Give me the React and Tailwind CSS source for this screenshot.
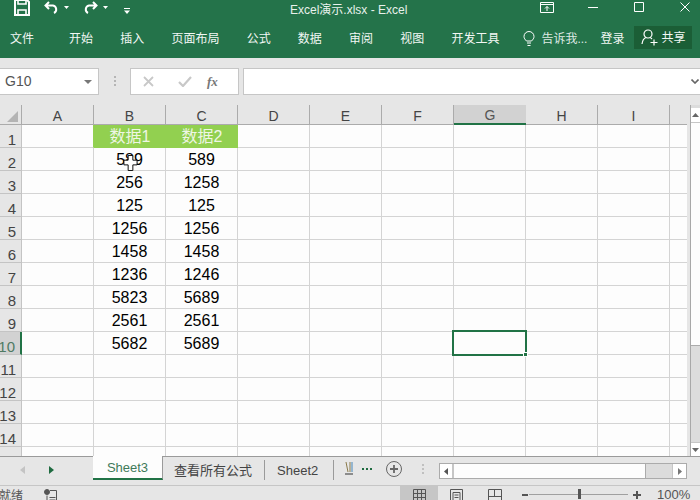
// App.jsx — Excel window with a small data sheet
const FONT = "font-['Liberation_Sans','Noto_Sans_CJK_SC',sans-serif]";
const COLS = ["A", "B", "C", "D", "E", "F", "G", "H", "I"];
const ROWS = [
  ["", "数据1", "数据2"],
  ["", "589", "589"],
  ["", "256", "1258"],
  ["", "125", "125"],
  ["", "1256", "1256"],
  ["", "1458", "1458"],
  ["", "1236", "1246"],
  ["", "5823", "5689"],
  ["", "2561", "2561"],
  ["", "5682", "5689"],
  [], [], [], [], [],
];
const TABS = ["开始", "插入", "页面布局", "公式", "数据", "审阅", "视图", "开发工具"];

function TitleBar() {
  return (
    <div className="relative flex h-[20px] items-center overflow-hidden text-white">
      <svg width="16" height="17" viewBox="0 0 16 17" className="ml-[14px] mt-[-6px] shrink-0" fill="none" stroke="#fff" strokeWidth="2">
        <path d="M1 1h12l2 2v13H1z" />
        <path d="M4 1v4h8V1M4 16v-5h8v5" strokeWidth="1.6" />
      </svg>
      <svg width="15" height="13" viewBox="0 0 15 13" className="ml-[14px] mt-[-6px] shrink-0" fill="none" stroke="#fff" strokeWidth="2">
        <path d="M5 1 1.5 4.5 5 8M2 4.5h7a4 4 0 0 1 1 7.5" />
      </svg>
      <svg width="5" height="3" viewBox="0 0 5 3" className="ml-[5px] mt-[-6px] shrink-0" fill="#fff"><path d="M0 0h5L2.5 3z" /></svg>
      <svg width="15" height="13" viewBox="0 0 15 13" className="ml-[14px] mt-[-6px] shrink-0" fill="none" stroke="#fff" strokeWidth="2">
        <path d="M10 1l3.5 3.5L10 8M13 4.5H6a4 4 0 0 0-1 7.5" />
      </svg>
      <svg width="5" height="3" viewBox="0 0 5 3" className="ml-[5px] mt-[-6px] shrink-0" fill="#fff"><path d="M0 0h5L2.5 3z" /></svg>
      <svg width="6" height="6" viewBox="0 0 6 6" className="ml-[16px] mt-[1px] shrink-0" fill="#fff"><path d="M0 0h6v1H0zM0 2.5h6L3 6z" /></svg>
      <span className="ml-[160px] text-[12px] leading-none text-[#e8f1ec]">Excel演示.xlsx - Excel</span>
      <svg width="14" height="11" viewBox="0 0 14 11" className="ml-auto mb-[6px] mr-[34px] shrink-0" fill="none" stroke="#fff">
        <path d="M.5.5h13v10H.5zM.5 2.5h13M7 9V4.5M5 6.5l2-2 2 2" />
      </svg>
      <svg width="10" height="1" viewBox="0 0 10 1" className="mb-[6px] mr-[36px] shrink-0"><path d="M0 .5h10" stroke="#fff" /></svg>
      <svg width="10" height="10" viewBox="0 0 10 10" className="mb-[6px] mr-[36px] shrink-0" fill="none" stroke="#fff"><path d="M.5.5h9v9h-9z" /></svg>
      <svg width="10" height="10" viewBox="0 0 10 10" className="mb-[6px] mr-[10px] shrink-0" fill="none" stroke="#fff"><path d="M.5.5l9 9M9.500.5l-9 9" /></svg>
    </div>
  );
}

function RibbonTabs() {
  return (
    <div className="flex h-[38px] items-start pl-[10px] pt-[11px] text-[12px] leading-[16px] text-[#f2f7f4]">
      <span className="mr-[35px]">文件</span>
      <div className="flex gap-[27.2px]">
        {TABS.map((t) => <span key={t}>{t}</span>)}
      </div>
      <svg width="12" height="16" viewBox="0 0 12 16" className="ml-[24px] shrink-0" fill="none" stroke="#fff" strokeWidth="1">
        <path d="M3.5 10C2 8.500 1 7.300 1 5.500a5 5 0 0 1 10 0c0 1.800-1 3-2.500 4.500zM4 12h4M4.500 14.500h3" />
      </svg>
      <span className="ml-[6px] w-[45px] whitespace-nowrap text-[#dfeae4]">告诉我...</span>
      <span className="ml-[14px]">登录</span>
      <div className="ml-[10px] mt-[-5px] flex h-[23px] w-[58px] items-center bg-[#1b5e36] pl-[7px]">
        <svg width="17" height="17" viewBox="0 0 17 17" className="shrink-0" fill="none" stroke="#fff" strokeWidth="1.2">
          <circle cx="7" cy="5" r="4" />
          <path d="M1 15c.5-3.500 2.500-6 4-6.500M9 8.500c.8.300 1.500.9 2 1.500M9.500 13.500h7M13 10.500v6" />
        </svg>
        <span className="ml-[3px] whitespace-nowrap">共享</span>
      </div>
    </div>
  );
}

function FormulaBar() {
  return (
    <div className="flex h-[47px] items-start bg-[#e6e6e6] pt-[10px]">
      <div className="flex h-[27px] w-[99px] items-center justify-between border-y border-r border-[#c6c6c6] bg-white pl-[5px] pr-[6px] text-[14px] text-[#555]">
        G10
        <svg width="8" height="4" viewBox="0 0 8 4" fill="#777"><path d="M0 0h8L4 4z" /></svg>
      </div>
      <div className="ml-[15px] mt-[8px] flex w-[2px] flex-col gap-[2px]">
        <i className="h-[2px] bg-[#b5b5b5]" /><i className="h-[2px] bg-[#b5b5b5]" /><i className="h-[2px] bg-[#b5b5b5]" />
      </div>
      <div className="ml-[14px] flex h-[27px] w-[109px] items-center border border-[#c6c6c6] bg-white">
        <svg width="11" height="11" viewBox="0 0 11 11" className="ml-[12px]" fill="none" stroke="#c8c8c8" strokeWidth="1.800"><path d="M1 1l9 9M10 1l-9 9" /></svg>
        <svg width="14" height="11" viewBox="0 0 14 11" className="ml-[24px]" fill="none" stroke="#c8c8c8" strokeWidth="2.200"><path d="M1 6l4 4 8-9" /></svg>
        <span className="ml-[15px] font-['Liberation_Serif',serif] text-[13px] font-bold italic text-[#777]">fx</span>
      </div>
      <div className="ml-[4px] flex h-[27px] flex-1 items-center justify-end border-y border-l border-[#c6c6c6] bg-white pr-[1px]">
        <svg width="8" height="5" viewBox="0 0 8 5" fill="none" stroke="#666" strokeWidth="1.600"><path d="M.5.5 4 4 7.500.5" /></svg>
      </div>
    </div>
  );
}

function Sheet() {
  return (
    <div className="flex h-[352px] border-b border-[#9a9a9a] bg-[#e6e6e6]">
      <div className="h-full w-[687px] overflow-hidden">
        <div className="grid grid-cols-[22px_repeat(9,72px)_18px] grid-rows-[20px_repeat(15,23px)]">
          <div className="relative border-b border-r border-[#ababab] bg-[#e6e6e6]">
            <svg width="11" height="11" viewBox="0 0 11 11" className="absolute bottom-[2px] right-[3px]" fill="#b4b4b4"><path d="M11 0v11H0z" /></svg>
          </div>
          {COLS.map((c) => (
            <div key={c} className={c === "G"
              ? "flex items-end justify-center border-b-2 border-[#217346] bg-[#d2d2d2] text-[14px] leading-[16px] text-[#555]"
              : "flex items-end justify-center border-b border-r border-[#ababab] bg-[#e6e6e6] text-[14px] leading-[16px] text-[#444]"}>{c}</div>
          ))}
          <div className="border-b border-[#ababab] bg-[#e6e6e6]" />
          {ROWS.map((row, r) => [
            <div key={`h${r}`} className={r === 9
              ? "flex items-end justify-end border-r-2 border-b border-r-[#217346] border-b-[#c4c4c4] bg-[#d2d2d2] pr-[5px] text-[15px] leading-[14px] text-[#4f7a63]"
              : "flex items-end justify-end border-b border-r border-[#c4c4c4] bg-[#e6e6e6] pr-[5px] text-[15px] leading-[14px] text-[#444]"}>{r + 1}</div>,
            ...COLS.map((c, i) => {
              const isHead = r === 0 && (i === 1 || i === 2);
              const isSel = r === 9 && c === "G";
              return (
                <div key={`${c}${r}`} className={isHead
                  ? "relative flex items-center justify-center bg-[#92d050] text-[16px] text-[#eef6e4]"
                  : r === 0 && i === 0
                    ? "relative border-b border-r border-b-[#d4d4d4] border-r-[#92d050] bg-[#fdfdfd]"
                    : "relative flex items-center justify-center border-b border-r border-[#d4d4d4] bg-[#fdfdfd] pt-px text-[16px] text-black"}>
                  {row[i]}
                  {isSel && (
                    <div className="absolute bottom-[-2px] left-[-2px] right-[-2px] top-[-2px] z-10 border-2 border-[#217346]">
                      <div className="absolute bottom-[-3px] right-[-3px] h-[5px] w-[5px] border border-white bg-[#217346]" />
                    </div>
                  )}
                  {r === 1 && c === "B" && (
                    <svg width="15" height="16" viewBox="0 0 15 17" className="absolute left-[29px] top-[7px] z-10">
                      <path d="M5 .5h5v5h4.500v5H10v6H5v-6H.5v-5H5z" fill="#fff" stroke="#000" />
                    </svg>
                  )}
                </div>
              );
            }),
            <div key={`e${r}`} className="border-b border-[#d4d4d4] bg-[#fdfdfd]" />,
          ])}
        </div>
      </div>
      <VScroll />
    </div>
  );
}

function VScroll() {
  return (
    <div className="ml-[3px] flex h-full w-[10px] flex-col border-l border-[#a8a8a8] bg-[#dcdcdc] pt-[3px]">
      <div className="flex h-[15px] items-center justify-center border-b border-[#c6c6c6] bg-white">
        <svg width="7" height="4" viewBox="0 0 7 4" fill="#666"><path d="M0 4h7L3.500 0z" /></svg>
      </div>
      <div className="h-[223px] border-b border-[#ababab] bg-[#fdfdfd]" />
      <div className="flex-1" />
      <div className="flex h-[14px] items-center justify-center border-t border-[#c6c6c6] bg-white">
        <svg width="7" height="4" viewBox="0 0 7 4" fill="#666"><path d="M0 0h7L3.500 4z" /></svg>
      </div>
    </div>
  );
}

function TabStrip() {
  return (
    <div className="flex h-[28px] items-start bg-[#e6e6e6] text-[13px] leading-[27px] text-[#444]">
      <svg width="5" height="8" viewBox="0 0 5 8" className="ml-[20px] mt-[9px] shrink-0" fill="#c4c4c4"><path d="M5 0v8L0 4z" /></svg>
      <svg width="5" height="8" viewBox="0 0 5 8" className="ml-[24px] mt-[9px] shrink-0" fill="#1f6b40"><path d="M0 0v8l5-4z" /></svg>
      <div className="ml-[39px] mt-[-1px] flex h-[24px] w-[70px] items-center justify-center border-b-2 border-r border-b-[#217346] border-r-[#9a9a9a] bg-[#fdfdfd] text-[#3f7a5a]">Sheet3</div>
      <span className="ml-[11px] whitespace-nowrap">查看所有公式</span>
      <i className="ml-[12px] mt-[3px] h-[20px] w-px bg-[#9a9a9a]" />
      <span className="ml-[12px]">Sheet2</span>
      <i className="ml-[15px] mt-[3px] h-[20px] w-px bg-[#9a9a9a]" />
      <svg width="8" height="14" viewBox="0 0 8 14" className="ml-[11px] mt-[4px] shrink-0" fill="none">
        <path d="M1 1l2 10M5 1v10" stroke="#8a7a4a" /><path d="M7 1v10" stroke="#7aa6c8" strokeWidth="1.500" /><path d="M0 13h8" stroke="#333" />
      </svg>
      <span className="ml-[9px] mt-[11px] flex gap-[2px]">
        <i className="h-[2px] w-[2px] bg-[#1f6b40]" /><i className="h-[2px] w-[2px] bg-[#1f6b40]" /><i className="h-[2px] w-[2px] bg-[#1f6b40]" />
      </span>
      <svg width="16" height="16" viewBox="0 0 16 16" className="ml-[14px] mt-[4px] shrink-0" fill="none" stroke="#666">
        <circle cx="8" cy="8" r="7.500" /><path d="M4 8h8M8 4v8" strokeWidth="1.800" />
      </svg>
      <div className="ml-[20px] mt-[7px] flex w-[2px] flex-col gap-[2px]">
        <i className="h-[2px] bg-[#c0c0c0]" /><i className="h-[2px] bg-[#c0c0c0]" /><i className="h-[2px] bg-[#c0c0c0]" />
      </div>
      <div className="ml-[15px] mt-[6px] flex h-[16px] w-[248px] shrink-0 border border-[#ababab] bg-[#dcdcdc]">
        <div className="flex w-[14px] items-center justify-center border-r-2 border-[#c6c6c6] bg-white">
          <svg width="4" height="7" viewBox="0 0 4 7" fill="#555"><path d="M4 0v7L0 3.500z" /></svg>
        </div>
        <div className="w-[192px] border-r border-[#ababab] bg-[#fdfdfd]" />
        <div className="flex-1" />
        <div className="flex w-[14px] items-center justify-center border-l border-[#c6c6c6] bg-white">
          <svg width="4" height="7" viewBox="0 0 4 7" fill="#777"><path d="M0 0v7l4-3.500z" /></svg>
        </div>
      </div>
    </div>
  );
}

function StatusBar() {
  return (
    <div className="flex h-[15px] items-start overflow-hidden border-t border-[#c6c6c6] bg-[#e6e6e6] text-[12px] leading-[16px] text-[#555]">
      <span className="ml-[-1px] mt-[2px]">就绪</span>
      <svg width="13" height="13" viewBox="0 0 13 13" className="ml-[21px] mt-[3px] shrink-0" fill="none" stroke="#555">
        <circle cx="3" cy="3" r="2.500" fill="#555" /><path d="M6 1.500h6.500V13M3 6.500V13h9M5.500 8.500h6M5.500 11h6" />
      </svg>
      <div className="ml-[343px] flex h-full w-[38px] shrink-0 justify-center bg-[#c6c6c6] pt-[3px]">
        <svg width="13" height="13" viewBox="0 0 13 13" fill="none" stroke="#555"><path d="M.5.5h12v12H.5zM4.500.5v12M8.500.5v12M.5 4.500h12M.5 8.500h12" /></svg>
      </div>
      <svg width="13" height="13" viewBox="0 0 13 13" className="ml-[12px] mt-[3px] shrink-0" fill="none" stroke="#555"><path d="M.5.500h12v12H.5zM3 3.500h7v9H3zM4.500 6h4M4.500 8.500h4" /></svg>
      <svg width="14" height="13" viewBox="0 0 14 13" className="ml-[25px] mt-[3px] shrink-0" fill="none" stroke="#555"><path d="M.5 13V.5h13V13M.5 7.500h13M6.500.5v7" /></svg>
      <i className="ml-[20px] mt-[8px] h-[2px] w-[6px] shrink-0 bg-[#555]" />
      <div className="relative ml-[1px] mt-[8px] h-px w-[99px] shrink-0 bg-[#a0a0a0]">
        <i className="absolute left-[49px] top-[-5px] h-[10px] w-[3px] bg-[#555]" />
      </div>
      <svg width="8" height="8" viewBox="0 0 8 8" className="ml-[5px] mt-[5px] shrink-0" fill="none" stroke="#555" strokeWidth="2"><path d="M0 4h8M4 0v8" /></svg>
      <span className="ml-[16px] mt-[1px] text-[13px]">100%</span>
    </div>
  );
}

export default function App() {
  return (
    <div className={`h-[500px] w-[700px] overflow-hidden ${FONT}`}>
      <div className="bg-[#24734a]">
        <TitleBar />
        <RibbonTabs />
      </div>
      <FormulaBar />
      <Sheet />
      <TabStrip />
      <StatusBar />
    </div>
  );
}
